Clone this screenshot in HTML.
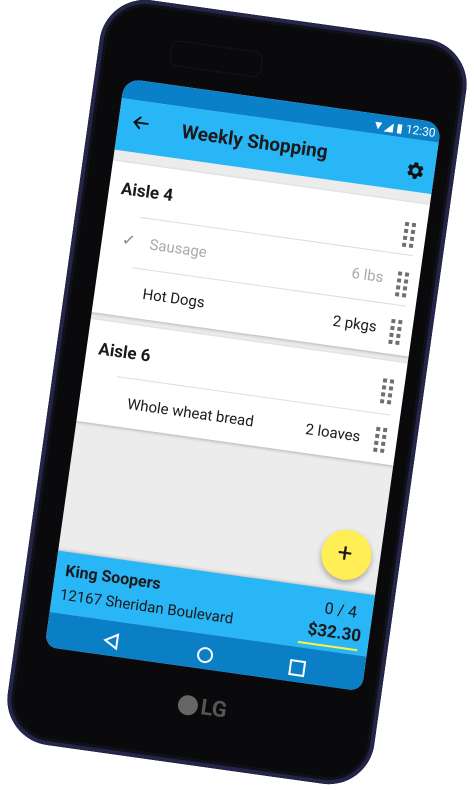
<!DOCTYPE html>
<html><head><meta charset="utf-8"><style>
html,body{margin:0;padding:0;background:#fff;width:474px;height:783px;overflow:hidden;font-family:"Roboto","Liberation Sans",sans-serif;}
#phone{position:absolute;left:52px;top:16px;width:370px;height:752px;border-radius:46px;background:#0a0a0c;box-shadow:inset 0 0 0 4px #25254c,inset 0 0 0 7px #101018;transform:rotate(8deg);transform-origin:50% 50%;}
#notch{position:absolute;left:72px;top:36px;width:90px;height:24px;border:1px solid #161616;border-radius:8px;}
#screen{position:absolute;left:30px;top:81px;width:320px;height:574px;border-radius:16px 16px 12px 12px;overflow:hidden;background:#ececec;}
.status{position:absolute;left:0;top:0;width:320px;height:20px;background:#0a80c8;}
.tool{position:absolute;left:0;top:20px;width:320px;height:52px;background:#29b6f6;}
.card{position:absolute;left:0;width:320px;background:#fff;box-shadow:0 1px 3px rgba(0,0,0,.25);}
.t{position:absolute;white-space:nowrap;color:#1a1a1a;}
.sep{position:absolute;left:34px;right:10px;height:1px;background:#ddd;}
.h{position:absolute;width:11px;height:26px;}
.h i{position:absolute;width:4px;height:4px;background:#6f6f6f;}
</style></head><body>
<div id="phone">
 <div id="notch"></div>
 <div id="screen">
  <div class="status"></div>
  <div class="tool"></div>
  <div class="t" style="left:252px;top:4px;font-size:12px;color:#fff;">▼◢ ▮ 12:30</div>
  <svg style="position:absolute;left:13px;top:32px" width="20" height="20" viewBox="0 0 20 20"><path d="M17 10H4M9 4L3 10l6 6" stroke="#111" stroke-width="2" fill="none"/></svg>
  <div class="t" style="left:64px;top:33px;font-size:19px;font-weight:bold;">Weekly Shopping</div>
  <svg style="position:absolute;left:289px;top:40px" width="22" height="22" viewBox="0 0 24 24"><path fill="#111" d="M19.4 13a7.5 7.5 0 000-2l2.1-1.6-2-3.5-2.5 1a7.4 7.4 0 00-1.700-1L15 3h-4l-.4 2.7a7.4 7.4 0 00-1.7 1l-2.5-1-2 3.5L6.5 11a7.5 7.5 0 000 2l-2.1 1.6 2 3.5 2.5-1a7.4 7.4 0 001.7 1L11 21h4l.4-2.7a7.4 7.4 0 001.7-1l2.5 1 2-3.5zM13 15.5A3.5 3.5 0 1113 8.5a3.5 3.5 0 010 7z"/></svg>

  <div class="card" style="top:83px;height:153px;"></div>
  <div class="t" style="left:12px;top:100px;font-size:17px;font-weight:bold;">Aisle 4</div>
  <div class="sep" style="top:135px"></div>
  <div class="t" style="left:20px;top:150px;font-size:16px;color:#888;">✓</div>
  <div class="t" style="left:48px;top:152px;font-size:15px;color:#aaa;">Sausage</div>
  <div class="t" style="left:252px;top:152px;font-size:15px;color:#aaa;">6 lbs</div>
  <div class="sep" style="top:186px"></div>
  <div class="t" style="left:48px;top:202px;font-size:15px;">Hot Dogs</div>
  <div class="t" style="left:240px;top:202px;font-size:15px;">2 pkgs</div>

  <div class="card" style="top:243px;height:103px;"></div>
  <div class="t" style="left:12px;top:262px;font-size:17px;font-weight:bold;">Aisle 6</div>
  <div class="sep" style="top:296px"></div>
  <div class="t" style="left:48px;top:313px;font-size:15px;">Whole wheat bread</div>
  <div class="t" style="left:228px;top:313px;font-size:15px;">2 loaves</div>

  <div class="h" style="left:298px;top:103px"><i style="left:0;top:0"></i><i style="left:7px;top:0"></i><i style="left:0;top:7px"></i><i style="left:7px;top:7px"></i><i style="left:0;top:14px"></i><i style="left:7px;top:14px"></i><i style="left:0;top:21px"></i><i style="left:7px;top:21px"></i></div>
  <div class="h" style="left:298px;top:153px"><i style="left:0;top:0"></i><i style="left:7px;top:0"></i><i style="left:0;top:7px"></i><i style="left:7px;top:7px"></i><i style="left:0;top:14px"></i><i style="left:7px;top:14px"></i><i style="left:0;top:21px"></i><i style="left:7px;top:21px"></i></div>
  <div class="h" style="left:298px;top:201px"><i style="left:0;top:0"></i><i style="left:7px;top:0"></i><i style="left:0;top:7px"></i><i style="left:7px;top:7px"></i><i style="left:0;top:14px"></i><i style="left:7px;top:14px"></i><i style="left:0;top:21px"></i><i style="left:7px;top:21px"></i></div>
  <div class="h" style="left:298px;top:261px"><i style="left:0;top:0"></i><i style="left:7px;top:0"></i><i style="left:0;top:7px"></i><i style="left:7px;top:7px"></i><i style="left:0;top:14px"></i><i style="left:7px;top:14px"></i><i style="left:0;top:21px"></i><i style="left:7px;top:21px"></i></div>
  <div class="h" style="left:298px;top:310px"><i style="left:0;top:0"></i><i style="left:7px;top:0"></i><i style="left:0;top:7px"></i><i style="left:7px;top:7px"></i><i style="left:0;top:14px"></i><i style="left:7px;top:14px"></i><i style="left:0;top:21px"></i><i style="left:7px;top:21px"></i></div>

  <div style="position:absolute;left:0;top:477px;width:320px;height:62px;background:#29b6f6;box-shadow:0 -1px 3px rgba(0,0,0,.2)"></div>
  <div style="position:absolute;left:261px;top:416px;width:50px;height:50px;border-radius:50%;background:#ffee55;box-shadow:0 3px 6px rgba(0,0,0,.3);"></div>
  <div class="t" style="left:277px;top:425px;font-size:26px;line-height:30px;">+</div>
  <div class="t" style="left:10px;top:486px;font-size:16px;font-weight:bold;">King Soopers</div>
  <div class="t" style="left:8px;top:511px;font-size:15px;">12167 Sheridan Boulevard</div>
  <div class="t" style="left:272px;top:487px;font-size:16px;">0 / 4</div>
  <div class="t" style="left:258px;top:510px;font-size:17px;font-weight:bold;">$32.30</div>
  <div style="position:absolute;left:250px;top:533px;width:60px;height:2px;background:#fff23a"></div>
  <div style="position:absolute;left:0;top:539px;width:320px;height:40px;background:#0a7fc6"></div>
  <svg style="position:absolute;left:56px;top:550px" width="20" height="18" viewBox="0 0 20 18"><path d="M15 2L3 9l12 7z" stroke="#fff" stroke-width="2" fill="none"/></svg>
  <div style="position:absolute;left:152px;top:552px;width:12px;height:12px;border:2px solid #fff;border-radius:50%"></div>
  <div style="position:absolute;left:245px;top:552px;width:12px;height:12px;border:2px solid #fff"></div>
 </div>
 <div class="t" style="left:170px;top:681px;font-size:22px;font-weight:bold;color:#555;"><span style="display:inline-block;width:20px;height:20px;border-radius:50%;background:#666;vertical-align:-3px;margin-right:3px"></span>LG</div>
</div>
</body></html>
